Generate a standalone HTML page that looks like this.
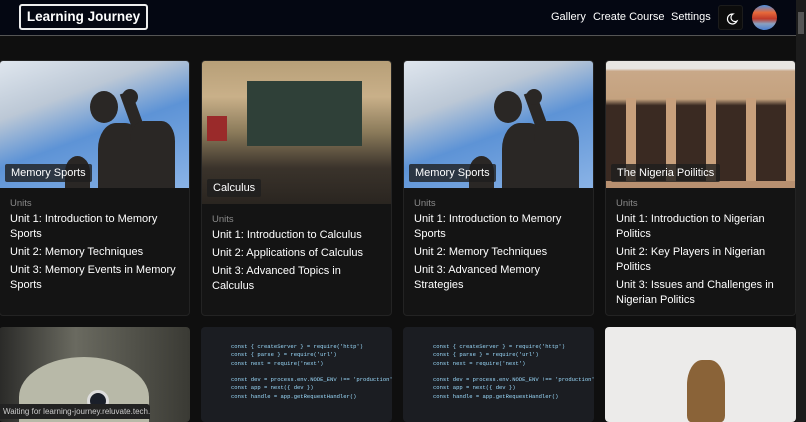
<!DOCTYPE html>
<html><head><style>
*{margin:0;padding:0;box-sizing:border-box}
body{width:806px;height:422px;overflow:hidden;background:#0f0f0f;font-family:"Liberation Sans",sans-serif;position:relative}
.hdr{position:absolute;left:0;top:0;width:796px;height:36px;background:#040712;border-bottom:1px solid #555}
.logo{position:absolute;left:19px;top:4px;width:129px;height:26px;border:2px solid #eee;border-radius:3px;color:#fff;font-weight:bold;font-size:13.5px;line-height:22px;text-align:center}
.nav{position:absolute;top:11px;color:#fff;font-size:11px;white-space:nowrap}
.moon{position:absolute;left:718px;top:5px;width:25px;height:25px;background:#0c0c0c;border:1px solid #1c1c1c;border-radius:3px}
.av{position:absolute;left:752px;top:5px;width:25px;height:25px;border-radius:50%;background:linear-gradient(#4a8fe0 0%,#e86a3a 30%,#c03a2a 55%,#8aa0c0 75%,#4a7fd0 100%)}
.sb{position:absolute;left:796px;top:0;width:10px;height:422px;background:#1c1c1c}
.sb i{position:absolute;left:2px;top:12px;width:6px;height:22px;background:#555}
.card{position:absolute;top:60px;width:191px;height:256px;background:#141414;border:1px solid #232323;border-radius:4px;overflow:hidden}
.img{position:absolute;left:0;top:0;width:100%;overflow:hidden}
.tag{position:absolute;left:5px;background:rgba(30,30,30,.8);color:#fff;font-size:11px;padding:3px 6px;border-radius:2px}
.body{position:absolute;left:10px;right:8px;color:#fff;font-size:11px;line-height:15px}
.u{color:#8a8a8a;font-size:9.5px;line-height:12px;margin-bottom:2px}
.body p{margin-bottom:3px}
.card2{position:absolute;top:327px;width:191px;height:95px;border-radius:4px;overflow:hidden}
.code{background:#1b1d22;color:#9cdcfe;font-family:"Liberation Mono",monospace;font-size:5.5px;line-height:8.3px;padding:16px 0 0 30px;white-space:pre}
.status{position:absolute;left:0;top:404px;width:150px;height:15px;background:#222;color:#ccc;font-size:8px;line-height:15px;padding-left:3px;border-top-right-radius:3px;white-space:nowrap;overflow:hidden}
.fig{position:absolute;background:#2a2725}
</style></head><body>
<div class="hdr">
<div class="logo">Learning Journey</div>
<div class="nav" style="left:551px">Gallery</div>
<div class="nav" style="left:593px">Create Course</div>
<div class="nav" style="left:671px">Settings</div>
<div class="moon"><svg width="25" height="25" viewBox="0 0 25 25"><path d="M14 8a5 5 0 1 0 4 7 4 4 0 0 1-4-7z" fill="none" stroke="#fff" stroke-width="1.2"/></svg></div>
<div class="av"></div>
</div>
<div class="sb"><i></i></div>

<div class="card" style="left:-1px">
<div class="img" style="height:127px;background:linear-gradient(160deg,#dfe6ee 0%,#bcc8d6 30%,#5d93d6 55%,#8ab3e6 100%)">
<div class="fig" style="left:90px;top:30px;width:28px;height:32px;border-radius:50%"></div>
<div class="fig" style="left:98px;top:62px;width:45px;height:65px;border-radius:40% 40% 0 0"></div>
<div class="fig" style="left:65px;top:95px;width:25px;height:32px;border-radius:50% 50% 0 0"></div>
<div class="fig" style="left:128px;top:30px;width:12px;height:50px;transform:rotate(-20deg)"></div>
<div class="fig" style="left:122px;top:28px;width:16px;height:16px;border-radius:50%"></div>
<div class="fig" style="left:130px;top:60px;width:45px;height:67px;border-radius:30% 30% 0 0"></div></div>
<div class="tag" style="top:103px">Memory Sports</div>
<div class="body" style="top:137px"><div class="u">Units</div><p>Unit 1: Introduction to Memory Sports</p><p>Unit 2: Memory Techniques</p><p>Unit 3: Memory Events in Memory Sports</p></div>
</div>

<div class="card" style="left:201px">
<div class="img" style="height:143px;background:linear-gradient(#b79f78 0%,#c9b089 25%,#8a7a5a 50%,#3a332b 75%,#2a2520 100%)">
<div style="position:absolute;left:45px;top:20px;width:115px;height:65px;background:#2f4038"></div>
<div style="position:absolute;left:5px;top:55px;width:20px;height:25px;background:#9a2a2a"></div></div>
<div class="tag" style="top:118px">Calculus</div>
<div class="body" style="top:153px"><div class="u">Units</div><p>Unit 1: Introduction to Calculus</p><p>Unit 2: Applications of Calculus</p><p>Unit 3: Advanced Topics in Calculus</p></div>
</div>

<div class="card" style="left:403px">
<div class="img" style="height:127px;background:linear-gradient(160deg,#dfe6ee 0%,#bcc8d6 30%,#5d93d6 55%,#8ab3e6 100%)">
<div class="fig" style="left:90px;top:30px;width:28px;height:32px;border-radius:50%"></div>
<div class="fig" style="left:98px;top:62px;width:45px;height:65px;border-radius:40% 40% 0 0"></div>
<div class="fig" style="left:65px;top:95px;width:25px;height:32px;border-radius:50% 50% 0 0"></div>
<div class="fig" style="left:128px;top:30px;width:12px;height:50px;transform:rotate(-20deg)"></div>
<div class="fig" style="left:122px;top:28px;width:16px;height:16px;border-radius:50%"></div>
<div class="fig" style="left:130px;top:60px;width:45px;height:67px;border-radius:30% 30% 0 0"></div></div>
<div class="tag" style="top:103px">Memory Sports</div>
<div class="body" style="top:137px"><div class="u">Units</div><p>Unit 1: Introduction to Memory Sports</p><p>Unit 2: Memory Techniques</p><p>Unit 3: Advanced Memory Strategies</p></div>
</div>

<div class="card" style="left:605px">
<div class="img" style="height:127px;background:linear-gradient(#e8e6e2 0%,#e8e6e2 6%,#c9a888 8%,#c4a27f 30%,#3a2a22 35%,#3a2a22 100%)">
<div style="position:absolute;left:0;top:37px;width:100%;height:85px;background:repeating-linear-gradient(90deg,transparent 0 20px,#c8a07c 20px 30px,transparent 30px 40px)"></div>
<div style="position:absolute;left:0;top:120px;width:100%;height:7px;background:#b89070"></div></div>
<div class="tag" style="top:103px">The Nigeria Poilitics</div>
<div class="body" style="top:137px"><div class="u">Units</div><p>Unit 1: Introduction to Nigerian Politics</p><p>Unit 2: Key Players in Nigerian Politics</p><p>Unit 3: Issues and Challenges in Nigerian Politics</p></div>
</div>

<div class="card2" style="left:-1px;background:linear-gradient(90deg,#2a2a28,#6a6a60 40%,#3a3a34)">
<div style="position:absolute;left:20px;top:30px;width:130px;height:80px;background:#b8b9a8;border-radius:50% 50% 0 0"></div>
<div style="position:absolute;left:88px;top:63px;width:22px;height:22px;background:#1a1f2a;border-radius:50%;border:3px solid #ddd"></div></div>
<div class="card2 code" style="left:201px">const { createServer } = require('http')
const { parse } = require('url')
const next = require('next')

const dev = process.env.NODE_ENV !== 'production'
const app = next({ dev })
const handle = app.getRequestHandler()</div>
<div class="card2 code" style="left:403px">const { createServer } = require('http')
const { parse } = require('url')
const next = require('next')

const dev = process.env.NODE_ENV !== 'production'
const app = next({ dev })
const handle = app.getRequestHandler()</div>
<div class="card2" style="left:605px;background:#ecebea">
<div style="position:absolute;left:82px;top:33px;width:38px;height:62px;background:#8a6338;border-radius:40% 40% 10% 10%"></div></div>

<div class="status">Waiting for learning-journey.reluvate.tech...</div>
</body></html>
